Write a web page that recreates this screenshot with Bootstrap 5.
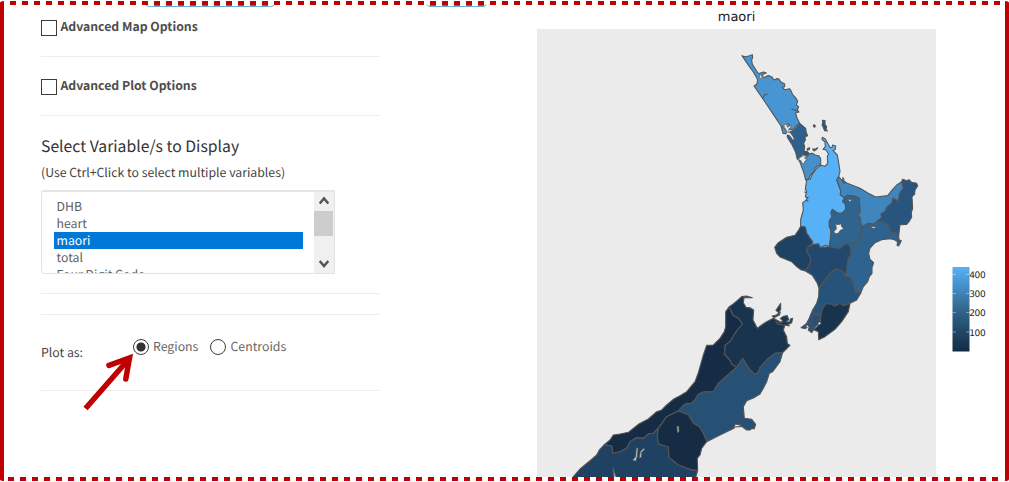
<!DOCTYPE html>
<html lang="en">
<head>
<meta charset="utf-8">
<meta name="viewport" content="width=device-width, initial-scale=1">
<title>Regional map</title>
<link href="https://cdn.jsdelivr.net/npm/bootstrap@5.3.0/dist/css/bootstrap.min.css" rel="stylesheet">
<style>
body{font-family:"Noto Sans CJK JP","Open Sans",sans-serif;font-size:12.3px;line-height:20px;color:#444;background:#fff;text-rendering:geometricPrecision}
.screen{width:1009px;height:482px}
.controls{width:339px;margin-left:41px}
.controls .rule{height:1px;background:#ededed}
.opt{height:58px;padding-top:18px}
.opt.first{height:56px;padding-top:16px}
.box{width:16px;height:16px;border:1.4px solid #3c3c3c;margin:4px 3.5px 0 0}
.opt b{font-size:12.25px;color:#4d4d4d}
.heading{font-size:15.75px;line-height:24px;color:#333}
.picker{width:294px;height:84px;border:1px solid #e3e3e3;border-top:2px solid #e6e6e6;border-radius:3px 0 0 3px;color:#606060}
.choices{padding:6px 11.5px 0 12px;line-height:17.1px}
.choices div{height:17.1px;padding-left:2.5px}
.choices .on{background:#0078d7;color:#fff}
.scroller{width:20px;background:#f0f0f0}
.thumb{height:25px;width:19px;background:#cdcdcd}
.dot{width:16px;height:16px;border:1.4px solid #3c3c3c;border-radius:50%;margin-top:3px}
.dot.on{background:radial-gradient(circle,#333 0 4.2px,#fff 4.9px)}
.plot{width:399px;margin-left:157px;font-family:"DejaVu Sans",sans-serif}
.plot-title{height:29px;line-height:36px;font-size:13px;color:#1a1a1a}
.scale-key{margin:267px 0 0 16px}
.overlay{position:absolute;left:0;top:0;pointer-events:none}
</style>
</head>
<body>
<main class="screen position-relative overflow-hidden d-flex align-items-start">
<section class="controls flex-shrink-0">
  <div class="opt first d-flex"><div class="box"></div><b>Advanced Map Options</b></div>
  <div class="rule"></div>
  <div class="opt d-flex"><div class="box"></div><b>Advanced Plot Options</b></div>
  <div class="rule"></div>
  <div class="heading" style="margin-top:18px">Select Variable/s to Display</div>
  <div style="margin-top:4px;margin-bottom:8px">(Use Ctrl+Click to select multiple variables)</div>
  <div class="picker d-flex overflow-hidden">
    <div class="choices flex-grow-1"><div>DHB</div><div>heart</div><div class="on">maori</div><div>total</div><div>Four Digit Code</div></div>
    <div class="scroller d-flex flex-column">
      <svg width="20" height="19"><path d="M5.700 11.500 10 6.500l4.300 5" fill="none" stroke="#555" stroke-width="2.500"/></svg>
      <div class="thumb"></div>
      <svg width="20" height="37"><path d="M5.700 25 10 30l4.300-5" fill="none" stroke="#555" stroke-width="2.500"/></svg>
    </div>
  </div>
  <div class="rule" style="margin-top:19px"></div>
  <div class="rule" style="margin-top:20px"></div>
  <div class="d-flex" style="height:75px;padding-top:21px">
    <div style="width:92px;padding-top:5.5px">Plot as:</div>
    <div class="dot on"></div><div style="width:57px;margin:0 0 0 4px;color:#666">Regions</div>
    <div class="dot"></div><div style="margin-left:4.5px;color:#666">Centroids</div>
  </div>
  <div class="rule"></div>
</section>
<section class="plot flex-shrink-0">
  <div class="plot-title text-center">maori</div>
  <svg class="d-block" width="399" height="448" viewBox="1611 87 1197 1344" stroke="#555" stroke-width="3.3" stroke-linejoin="round">
    <path fill="#ebebeb" stroke="none" d="M1611 87h1197v1344H1611z"/>
    <!-- upper north island -->
    <g transform="translate(2100 90)">
      <path fill="#4795d3" d="M126,77 135,80 146,78 157,74 158,82 155,90 157,103 166,117 172,127 177,131 183,128 191,126 199,129 190,132 187,139 193,143 200,138 207,137 216,141 222,150 230,146 237,147 242,155 254,162 254,170 247,172 254,179 269,176 274,184 278,194 286,202 293,213 289,225 296,230 292,240 297,246 287,248 290,262 299,280 289,287 280,298 270,299 268,291 261,290 252,286 247,290 259,302 258,311 249,310 243,288 218,250 189,207 162,168 170,163 173,151 171,145 160,126 144,104Z"/>
      <path fill="none" d="M190 205l2-9 11-4M274 237l12 4 8 3M263 280l9 8"/>
      <path fill="#ebebeb" stroke-width="2" d="M177 137l6-3 4 8-6 4zM251 285l8-3 4 10 8-6 2 6-8 6 3 10-7-2-5-10z"/>
      <path fill="#2c608f" d="M299,280 317,295 319,308 323,317 315,320 316,330 311,340 314,350 312,362 324,370 318,376 305,374 302,383 292,388 287,367 277,346 262,322 262,315 268,317 280,333 283,326 278,316 270,306 283,300Z"/>
      <path fill="#4490cd" d="M296,390 309,397 316,388 321,378 330,371 337,370 345,375 356,377 362,386 362,405 352,408 345,415 342,426 331,435 326,447 317,450 312,430 300,397Z"/>
      <path fill="#ebebeb" stroke-width="2" d="M299 382l8-2 3-5 6 5-2 5 8 4-7 4-3 9-6-3-3-7-7-3z"/>
      <path fill="#28527a" d="M367 271l8 1 0 12 5 6-2 7 4 6-8-1-5-12-3-7 3-4zM342 284l4 3-2 5-4-4zM338 357l9 0 6-4-3 5-8 5zM321 357l7-4 1 4-6 4zM310 364l12 1 5 5-3 6-12-3z"/>
    </g>
    <!-- central north island -->
    <g transform="translate(2280 390)">
      <path fill="#56b1f7" d="M187,22 196,27 202,38 210,52 216,53 218,45 227,48 226,58 219,62 232,75 236,98 240,125 236,140 230,150 236,165 242,182 241,195 253,203 248,215 256,222 257,238 246,250 233,249 225,244 217,238 213,248 216,262 208,272 208,290 213,300 211,330 208,350 197,346 180,353 176,342 158,344 148,322 139,308 136,292 122,289 122,268 130,240 128,218 136,212 142,206 136,200 140,184 136,178 140,150 151,147 158,131 167,119 177,110 183,106 195,109 203,100 202,78 206,72 198,60 189,58 196,50 195,36 186,28Z"/>
      <path fill="#3f86bf" d="M236,140 245,150 262,160 300,175 325,190 347,201 383,197 398,178 410,165 425,155 430,175 420,188 414,213 399,205 395,220 380,232 376,244 363,252 365,262 353,272 340,283 325,280 308,290 302,280 300,264 292,252 300,248 298,205 285,199 262,196 253,203 241,195 242,182 236,165 230,150Z"/>
      <path fill="#2f648f" d="M253,203 262,196 285,199 298,205 300,248 292,252 300,264 302,280 308,290 303,318 296,325 292,338 277,338 268,345 258,340 248,348 240,356 208,350 211,330 213,300 208,290 208,272 216,262 213,248 217,238 225,244 233,249 246,250 257,238 256,222 248,215Z"/>
      <path fill="#28557d" d="M425,155 428,148 440,152 447,149 455,157 470,160 473,168 465,180 464,192 456,200 458,235 454,248 455,262 447,275 440,283 420,284 418,300 416,318 407,308 393,308 388,293 380,281 370,275 355,272 365,262 363,252 376,244 380,232 395,220 399,205 414,213 420,188 430,175Z"/>
      <path fill="#2f638f" d="M308,290 325,280 340,283 355,272 370,275 380,281 388,293 393,308 407,308 416,318 417,329 424,332 416,348 411,346 413,335 403,329 390,326 365,329 345,338 330,354 326,370 330,388 341,398 336,413 336,430 328,440 323,455 310,470 302,490 285,486 280,460 270,442 256,438 260,420 263,390 272,375 273,360 266,342 277,338 292,338 296,325 303,318Z"/>
      <path fill="#1e4264" d="M122,289 136,292 139,308 148,322 158,335 156,342 145,350 140,362 152,385 150,400 144,412 135,422 122,419 110,410 95,395 75,387 60,381 50,370 44,352 55,338 80,322 105,316 116,300Z"/>
      <path fill="#22496d" d="M158,344 176,342 180,353 208,350 240,356 248,348 258,340 268,345 273,360 272,375 263,390 260,420 256,438 248,425 230,417 215,425 195,450 177,475 172,460 157,436 135,422 144,412 150,400 152,385 140,362 145,350Z"/>
      <path fill="#265379" d="M177,475 195,450 215,425 230,417 248,425 256,438 270,442 280,460 285,486 302,490 290,510 270,520 250,527 240,520 225,528 212,522 197,522 190,532 183,550 175,555 162,550 158,540 170,520 176,500Z"/>
      <path fill="#ebebeb" stroke-width="2.5" d="M227 282l8 2 8-3 2 9 6 6-11 6-5 8-11 1-2-7 7-7zM265 209l6-2 3 6-5 3zM333 291l6-2 9 2-4 4-7-1z"/>
      <path fill="#3976a8" stroke-width="2.5" d="M248 142l4 4 0 9-4-4zM247 156l10 1-4 4z"/>
      <path fill="none" d="M139 204l7-2M137 213l8-1M133 185l6 3"/>
    </g>
    <!-- lower north island -->
    <g transform="translate(2220 660)">
      <path fill="#18334e" d="M250,262 257,252 272,252 285,258 300,250 310,257 330,250 325,275 315,290 305,305 285,328 255,350 236,359 235,335 222,330 240,310 243,280Z"/>
      <path fill="#275177" d="M218,270 222,280 235,285 243,282 240,305 228,318 215,338 205,330 208,321 202,316 197,326 183,323 200,310 207,296Z"/>
      <path fill="none" stroke-width="2.5" d="M229 280l-12 10-4 18-13 2M216 309l4 12-8 9"/>
      <path fill="#ebebeb" stroke-width="2" d="M234 310l5-4 5 4-6 4zM198 317l5-2 3 5-5 4z"/>
    </g>
    <!-- south island, north -->
    <g transform="translate(1710 840)">
      <path fill="#152c44" d="M478,80 467,95 467,140 463,155 450,175 430,195 410,196 400,225 393,250 385,278 375,305 350,335 330,347 310,358 290,375 275,390 260,395 235,417 205,433 175,457 150,462 130,465 120,480 103,494 125,498 128,520 150,515 170,505 180,485 200,473 220,475 235,462 250,460 270,438 290,410 325,393 338,378 350,370 362,371 375,360 385,343 400,336 430,335 445,310 460,297 485,275 500,262 485,252 480,240 463,222 466,195 480,185 500,152 518,132 505,115 488,105Z"/>
      <path fill="#19344f" d="M478,80 492,70 515,50 530,48 547,53 522,53 520,68 528,82 540,83 551,90 549,120 562,145 575,135 590,125 610,115 630,125 645,135 640,150 650,170 652,190 660,196 638,218 615,220 592,238 570,262 566,275 555,284 540,270 518,236 500,262 485,252 480,240 463,222 466,195 480,185 500,152 518,132 505,115 488,105Z"/>
      <path fill="#1b3854" d="M632 70l0 18-6 10-8-7 8-12zM631 96l-12 9-12 3 5 5 16-8zM640 109l12-2 4 12-8 7 11 0 2-9 7-2-3 13-12 6 5 4-13-3-11 0-12-3-5-7 15 4 6-6-7-8z"/>
    </g>
    <!-- south island, south -->
    <g transform="translate(1710 1110)">
      <path fill="#1f4263" d="M103,224 88,240 80,255 60,272 30,297 10,320 5,340 372,340 383,302 360,298 325,285 297,262 295,230 265,222 262,195 265,175 270,168 250,190 235,192 220,205 200,203 180,215 170,235 150,245 128,250 125,228Z"/>
      <path fill="#265175" d="M325,123 338,108 350,100 362,101 375,90 385,73 400,66 430,65 445,40 460,27 485,5 500,-8 518,-34 540,0 555,14 566,5 570,-8 592,-32 615,-50 638,-52 630,-25 608,5 598,10 590,35 580,55 570,72 550,84 530,92 520,110 523,145 545,148 557,163 553,176 546,175 540,180 530,180 510,165 495,162 492,175 450,195 410,215 400,190 388,170 370,160 355,135Z"/>
      <path fill="#152c44" d="M325,123 355,135 370,160 388,170 400,190 410,215 395,235 390,255 382,265 383,302 360,298 325,285 297,262 295,230 265,222 262,195 265,175 290,140Z"/>
      <path fill="#c9c9c2" stroke-width="2" d="M321 169l5-1 1 17-5 3zM199 234l5 0-2 25-5 15-9-4 9-10zM221 235l3 3-9 9-1 15-6 2 3-19zM129 292l5 18 5 12-7 0z"/>
      <path fill="none" d="M495 171l23-2"/>
    </g>
  </svg>
</section>
<aside class="scale-key">
  <svg width="40" height="86" font-family="DejaVu Sans,sans-serif" font-size="9" fill="#222">
    <defs><linearGradient id="blue" x2="0" y2="1"><stop stop-color="#56b1f7"/><stop offset=".5" stop-color="#32678f"/><stop offset="1" stop-color="#132b43"/></linearGradient></defs>
    <path fill="url(#blue)" d="M.5 0h17v84.500H.5z"/>
    <path stroke="#fff" stroke-opacity=".4" d="M.5 7.500H4m10 0h3.500M.5 26.500H4m10 0h3.500M.5 45.500H4m10 0h3.500M.5 65H4m10 0h3.500"/>
    <text x="17.200" y="11" textLength="16.500">400</text><text x="17.200" y="30" textLength="16.500">300</text><text x="17.200" y="49.300" textLength="16.500">200</text><text x="17.200" y="68.500" textLength="16.500">100</text>
  </svg>
</aside>
<!-- frame and pointer lie over the page -->
<svg class="overlay" width="1009" height="482">
  <path d="M145.500 4.500q1 2 4 2h121q3 0 4-2M427 4.500q1 2 3 2h53q3 0 3-2" fill="none" stroke="#62b0d0"/>
  <path d="M154 5.300h117M430 5.300h54" fill="none" stroke="#168ab5" stroke-dasharray="6" stroke-width="1.300"/>
  <path d="M10 3h992" stroke="#c00000" stroke-width="4" stroke-dasharray="6"/>
  <path d="M8 479h994" stroke="#c00000" stroke-width="4" stroke-dasharray="6"/>
  <path d="M0 3q0-2 4-2v480q-4 0-4-2zM1005 1q4 0 4 2v476q0 2-4 2z" fill="#c00000"/>
  <path d="M85.500 408.500 128 360" stroke="#c00000" stroke-width="5.500"/>
  <path d="M109 365.300 129.500 358 125.800 379" fill="none" stroke="#c00000" stroke-width="5.500" stroke-linecap="round" stroke-linejoin="miter"/>
</svg>
</main>
<script src="https://cdn.jsdelivr.net/npm/bootstrap@5.3.0/dist/js/bootstrap.bundle.min.js"></script>
</body>
</html>
